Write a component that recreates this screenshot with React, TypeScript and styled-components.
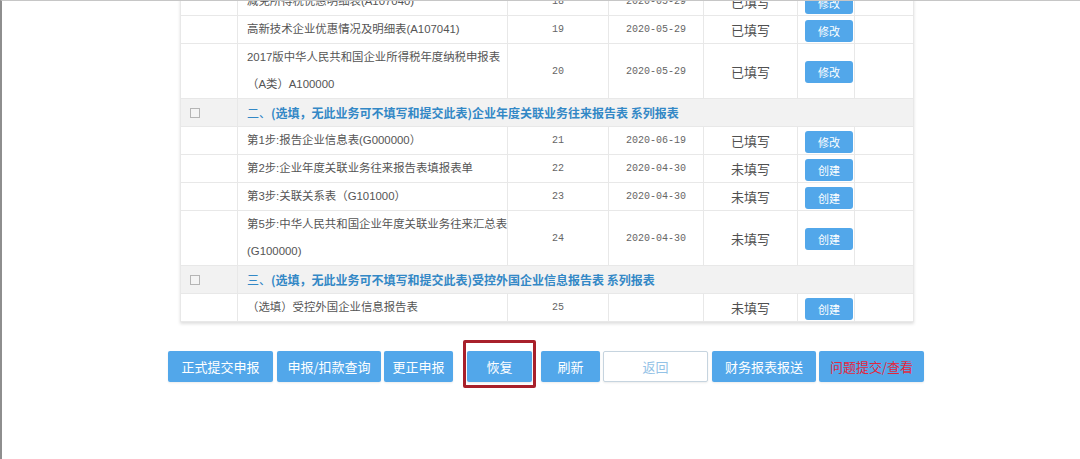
import React from "react";
import styled, { createGlobalStyle } from "styled-components";

const GlobalStyle = createGlobalStyle`
  html, body { margin: 0; padding: 0; background: #fff; }
  body { font-family: "Liberation Sans", "Noto Sans CJK SC", sans-serif; }
  * { box-sizing: border-box; }
`;

const Frame = styled.div`
  width: 1080px;
  height: 459px;
  overflow: hidden;
  border-left: 2px solid #8e8e8e;
  border-top: 1px solid #c6c6c6;
  background: #fff;
`;

const Content = styled.div`
  padding-left: 166px;
  margin-top: -14px;
  display: flex;
  flex-direction: column;
  align-items: flex-start;
`;

const Table = styled.table`
  margin-left: 12px;
  width: 733px;
  table-layout: fixed;
  border-collapse: collapse;
  border: 1px solid #e4e4e4;
  box-shadow: 0 2px 3px rgba(0, 0, 0, 0.13);
  font-family: "Liberation Sans", "Noto Sans CJK SC", sans-serif;
`;

const Cell = styled.td<{ $align?: string }>`
  padding: 0;
  height: 27px;
  line-height: 27px;
  border: 1px solid #e8e8e8;
  text-align: ${(p) => p.$align || "center"};
  vertical-align: middle;
  white-space: nowrap;
`;

const NameCell = styled(Cell)`
  padding-left: 9px;
  font-size: 11.4px;
  color: #555;
`;

const NumCell = styled(Cell)`
  font-family: "Liberation Mono", "Noto Sans CJK SC", monospace;
  font-size: 10px;
  color: #666;
`;

const StatusCell = styled(Cell)`
  font-family: "Noto Sans CJK SC", sans-serif;
  font-size: 13px;
  color: #505050;
`;

const CheckCell = styled(Cell)`
  padding-left: 9px;
  text-align: left;
`;

const SectionRow = styled.tr`
  background: #f2f2f2;
`;

const SectionCell = styled(Cell)`
  padding-left: 9px;
  text-align: left;
  font-family: "Noto Sans CJK SC", sans-serif;
  font-size: 12px;
  color: #3388c6;
  font-weight: 700;
  border-left: 1px solid #e8e8e8;
  border-right: 1px solid #e8e8e8;
`;

const SectionNo = styled.span`
  font-weight: 400;
`;

const Check = styled.span`
  display: inline-block;
  width: 10px;
  height: 10px;
  border: 1px solid #b5b5b5;
  background: #f4f4f4;
  vertical-align: middle;
  margin-top: -2px;
`;

const CellButton = styled.span`
  display: inline-block;
  width: 48px;
  height: 22px;
  line-height: 22px;
  margin-left: 7px;
  border-radius: 3px;
  background: #52a7ea;
  color: #fff;
  font-family: "Noto Sans CJK SC", sans-serif;
  font-size: 11px;
  text-align: center;
  vertical-align: middle;
`;

const ButtonBar = styled.div`
  display: flex;
  align-items: center;
  margin-top: 29px;
`;

const Button = styled.div<{ $w: number; $variant?: "plain" | "ghost" | "alert"; $ml?: number }>`
  width: ${(p) => p.$w}px;
  height: 31px;
  margin-left: ${(p) => p.$ml ?? 4}px;
  display: flex;
  align-items: center;
  justify-content: center;
  font-family: "Noto Sans CJK SC", sans-serif;
  font-size: 13px;
  border-radius: 2px;
  background: ${(p) => (p.$variant === "ghost" ? "#fff" : "#52a7ea")};
  color: ${(p) =>
    p.$variant === "ghost" ? "#93c2e6" : p.$variant === "alert" ? "#e2273f" : "#fff"};
  border: ${(p) => (p.$variant === "ghost" ? "1px solid #c6d4df" : "none")};
  box-shadow: 0 1px 2px rgba(0, 0, 0, 0.08);
`;

const Highlight = styled.div`
  position: relative;
  margin-left: 14px;
  margin-right: 9px;
`;

const HighlightRing = styled.div`
  position: absolute;
  left: -4px;
  right: -4px;
  top: -11px;
  bottom: -6px;
  border: 3px solid #a8202b;
  border-radius: 2px;
  pointer-events: none;
`;

type Row = {
  name: React.ReactNode;
  no?: number;
  date?: string;
  status: string;
  action: string;
};

type Section = { no: string; title: string; series: string };

const group1: Row[] = [
  { name: "减免所得税优惠明细表(A107040)", no: 18, date: "2020-05-29", status: "已填写", action: "修改" },
  { name: "高新技术企业优惠情况及明细表(A107041)", no: 19, date: "2020-05-29", status: "已填写", action: "修改" },
  {
    name: (
      <>
        2017版中华人民共和国企业所得税年度纳税申报表
        <br />（A类）A100000
      </>
    ),
    no: 20,
    date: "2020-05-29",
    status: "已填写",
    action: "修改",
  },
];

const group2: Row[] = [
  { name: "第1步:报告企业信息表(G000000）", no: 21, date: "2020-06-19", status: "已填写", action: "修改" },
  { name: "第2步:企业年度关联业务往来报告表填报表单", no: 22, date: "2020-04-30", status: "未填写", action: "创建" },
  { name: "第3步:关联关系表（G101000）", no: 23, date: "2020-04-30", status: "未填写", action: "创建" },
  {
    name: (
      <>
        第5步:中华人民共和国企业年度关联业务往来汇总表
        <br />(G100000)
      </>
    ),
    no: 24,
    date: "2020-04-30",
    status: "未填写",
    action: "创建",
  },
];

const group3: Row[] = [
  { name: "（选填）受控外国企业信息报告表", no: 25, status: "未填写", action: "创建" },
];

const sec2: Section = {
  no: "二、",
  title: "(选填，无此业务可不填写和提交此表)企业年度关联业务往来报告表",
  series: "系列报表",
};
const sec3: Section = {
  no: "三、",
  title: "(选填，无此业务可不填写和提交此表)受控外国企业信息报告表",
  series: "系列报表",
};

const DataRow = ({ r }: { r: Row }) => (
  <tr>
    <CheckCell />
    <NameCell $align="left">{r.name}</NameCell>
    <NumCell>{r.no}</NumCell>
    <NumCell>{r.date}</NumCell>
    <StatusCell>{r.status}</StatusCell>
    <Cell $align="left">
      <CellButton>{r.action}</CellButton>
    </Cell>
    <Cell />
  </tr>
);

const SectionHeader = ({ s }: { s: Section }) => (
  <SectionRow>
    <CheckCell>
      <Check />
    </CheckCell>
    <SectionCell colSpan={6}>
      <SectionNo>{s.no}</SectionNo>
      {s.title} {s.series}
    </SectionCell>
  </SectionRow>
);

type Btn = { label: string; w: number; variant?: "plain" | "ghost" | "alert"; ml?: number };

const buttons: Btn[] = [
  { label: "正式提交申报", w: 105, ml: 0 },
  { label: "申报/扣款查询", w: 104, ml: 4 },
  { label: "更正申报", w: 69, ml: 3 },
];
const buttonsAfter: Btn[] = [
  { label: "刷新", w: 59, ml: 0 },
  { label: "返回", w: 105, variant: "ghost", ml: 3 },
  { label: "财务报表报送", w: 104, ml: 4 },
  { label: "问题提交/查看", w: 105, variant: "alert", ml: 3 },
];

export default function App() {
  return (
    <>
      <GlobalStyle />
      <Frame>
        <Content>
          <Table>
            <colgroup>
              <col style={{ width: 57 }} />
              <col style={{ width: 270 }} />
              <col style={{ width: 101 }} />
              <col style={{ width: 95 }} />
              <col style={{ width: 94 }} />
              <col style={{ width: 57 }} />
              <col style={{ width: 59 }} />
            </colgroup>
            <tbody>
              {group1.map((r, i) => (
                <DataRow key={"a" + i} r={r} />
              ))}
              <SectionHeader s={sec2} />
              {group2.map((r, i) => (
                <DataRow key={"b" + i} r={r} />
              ))}
              <SectionHeader s={sec3} />
              {group3.map((r, i) => (
                <DataRow key={"c" + i} r={r} />
              ))}
            </tbody>
          </Table>
          <ButtonBar>
            {buttons.map((b) => (
              <Button key={b.label} $w={b.w} $variant={b.variant} $ml={b.ml}>
                {b.label}
              </Button>
            ))}
            <Highlight>
              <Button $w={65} $ml={0}>恢复</Button>
              <HighlightRing />
            </Highlight>
            {buttonsAfter.map((b) => (
              <Button key={b.label} $w={b.w} $variant={b.variant} $ml={b.ml}>
                {b.label}
              </Button>
            ))}
          </ButtonBar>
        </Content>
      </Frame>
    </>
  );
}
